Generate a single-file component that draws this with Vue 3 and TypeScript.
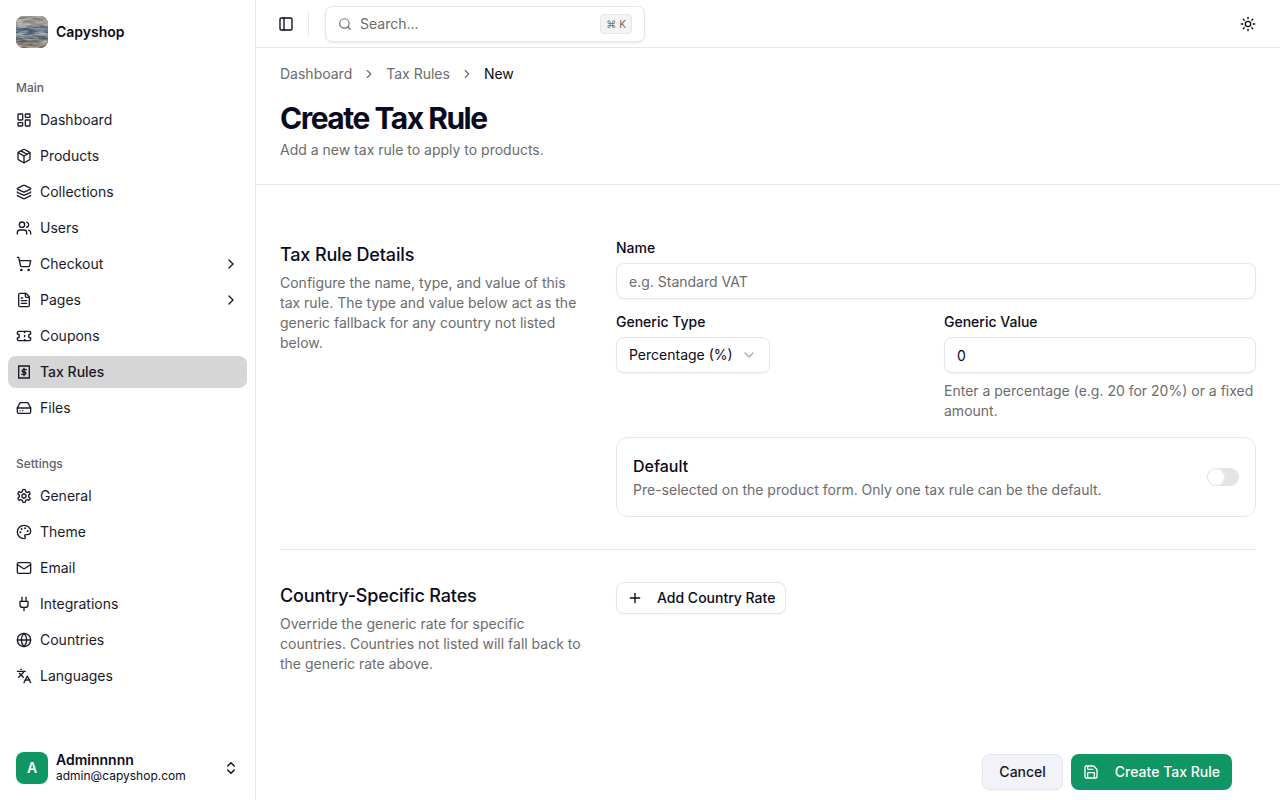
<script setup lang="ts">
import { h } from 'vue'

// helpers so circles and rects can live in the same path list as the rest
const circle = (cx: number, cy: number, r: number) =>
	`M${cx - r} ${cy}a${r} ${r} 0 1 0 ${2 * r} 0a${r} ${r} 0 1 0 ${-2 * r} 0`
const rect = (x: number, y: number, w: number, hh: number, r: number) =>
	`M${x + r} ${y}h${w - 2 * r}a${r} ${r} 0 0 1 ${r} ${r}v${hh - 2 * r}a${r} ${r} 0 0 1 ${-r} ${r}h${-(w - 2 * r)}a${r} ${r} 0 0 1 ${-r} ${-r}v${-(hh - 2 * r)}a${r} ${r} 0 0 1 ${r} ${-r}z`

const ICONS: Record<string, string[]> = {
	dashboard: [rect(3, 3, 7, 9, 1), rect(14, 3, 7, 5, 1), rect(14, 12, 7, 9, 1), rect(3, 16, 7, 5, 1)],
	package: [
		'M11 21.73a2 2 0 0 0 2 0l7-4A2 2 0 0 0 21 16V8a2 2 0 0 0-1-1.73l-7-4a2 2 0 0 0-2 0l-7 4A2 2 0 0 0 3 8v8a2 2 0 0 0 1 1.73z',
		'M12 22V12',
		'M3.29 7 12 12l8.71-5',
		'm7.5 4.27 9 5.15'
	],
	layers: [
		'M12.83 2.18a2 2 0 0 0-1.66 0L2.6 6.08a1 1 0 0 0 0 1.83l8.58 3.91a2 2 0 0 0 1.66 0l8.58-3.9a1 1 0 0 0 0-1.83z',
		'M2 12a1 1 0 0 0 .58.91l8.6 3.91a2 2 0 0 0 1.65 0l8.58-3.9A1 1 0 0 0 22 12',
		'M2 17a1 1 0 0 0 .58.91l8.6 3.91a2 2 0 0 0 1.65 0l8.58-3.9A1 1 0 0 0 22 17'
	],
	users: [
		'M16 21v-2a4 4 0 0 0-4-4H6a4 4 0 0 0-4 4v2',
		circle(9, 7, 4),
		'M22 21v-2a4 4 0 0 0-3-3.87',
		'M16 3.13a4 4 0 0 1 0 7.75'
	],
	cart: [
		circle(8, 21, 1),
		circle(19, 21, 1),
		'M2.05 2.05h2l2.66 12.42a2 2 0 0 0 2 1.58h9.78a2 2 0 0 0 1.95-1.57l1.65-7.43H5.12'
	],
	file: [
		'M15 2H6a2 2 0 0 0-2 2v16a2 2 0 0 0 2 2h12a2 2 0 0 0 2-2V7Z',
		'M14 2v4a2 2 0 0 0 2 2h4',
		'M10 9H8',
		'M16 13H8',
		'M16 17H8'
	],
	ticket: [
		'M2 9a3 3 0 0 1 0 6v2a2 2 0 0 0 2 2h16a2 2 0 0 0 2-2v-2a3 3 0 0 1 0-6V7a2 2 0 0 0-2-2H4a2 2 0 0 0-2 2Z',
		'M13 5v2',
		'M13 17v2',
		'M13 11v2'
	],
	// своя иконка: рамка с пунктиром сверху и снизу и знак доллара
	receipt: [
		'M4 3.5v17',
		'M20 3.5v17',
		'M4 3h16',
		'M4 21h16',
		'M12 6.5v11',
		'M15.5 8.5H11a1.75 1.75 0 0 0 0 3.5h2a1.75 1.75 0 0 1 0 3.5H8.5'
	],
	drive: [
		'M22 12H2',
		'M5.45 5.11 2 12v6a2 2 0 0 0 2 2h16a2 2 0 0 0 2-2v-6l-3.45-6.89A2 2 0 0 0 16.76 4H7.24a2 2 0 0 0-1.79 1.11z',
		'M6 16h.01',
		'M10 16h.01'
	],
	settings: [
		'M12.22 2h-.44a2 2 0 0 0-2 2v.18a2 2 0 0 1-1 1.73l-.43.25a2 2 0 0 1-2 0l-.15-.08a2 2 0 0 0-2.73.73l-.22.38a2 2 0 0 0 .73 2.73l.15.1a2 2 0 0 1 1 1.72v.51a2 2 0 0 1-1 1.74l-.15.09a2 2 0 0 0-.73 2.73l.22.38a2 2 0 0 0 2.73.73l.15-.08a2 2 0 0 1 2 0l.43.25a2 2 0 0 1 1 1.73V20a2 2 0 0 0 2 2h.44a2 2 0 0 0 2-2v-.18a2 2 0 0 1 1-1.73l.43-.25a2 2 0 0 1 2 0l.15.08a2 2 0 0 0 2.73-.73l.22-.39a2 2 0 0 0-.73-2.73l-.15-.08a2 2 0 0 1-1-1.74v-.5a2 2 0 0 1 1-1.74l.15-.09a2 2 0 0 0 .73-2.73l-.22-.38a2 2 0 0 0-2.73-.73l-.15.08a2 2 0 0 1-2 0l-.43-.25a2 2 0 0 1-1-1.73V4a2 2 0 0 0-2-2z',
		circle(12, 12, 3)
	],
	palette: [
		'M12 22a1 1 0 0 1 0-20 10 9 0 0 1 10 9 5 5 0 0 1-5 5h-2.25a1.75 1.75 0 0 0-1.4 2.8l.3.4a1.75 1.75 0 0 1-1.4 2.8z',
		circle(13.5, 6.5, 0.5),
		circle(17.5, 10.5, 0.5),
		circle(6.5, 12.5, 0.5),
		circle(8.5, 7.5, 0.5)
	],
	mail: ['m22 7-8.991 5.727a2 2 0 0 1-2.009 0L2 7', rect(2, 4, 20, 16, 2)],
	plug: ['M12 22v-5', 'M9 8V2', 'M15 8V2', 'M18 8v5a4 4 0 0 1-4 4h-4a4 4 0 0 1-4-4V8Z'],
	globe: [circle(12, 12, 10), 'M12 2a14.5 14.5 0 0 0 0 20 14.5 14.5 0 0 0 0-20', 'M2 12h20'],
	languages: ['m5 8 6 6', 'm4 14 6-6 2-3', 'M2 5h12', 'M7 2h1', 'm22 22-5-10-5 10', 'M14 18h6'],
	chevronRight: ['m9 18 6-6-6-6'],
	chevronDown: ['m6 9 6 6 6-6'],
	chevronsUpDown: ['m7 15 5 5 5-5', 'm7 9 5-5 5 5'],
	panel: [rect(3, 3, 18, 18, 2), 'M9 3v18'],
	search: ['m21 21-4.34-4.34', circle(11, 11, 8)],
	sun: [
		circle(12, 12, 4),
		'M12 2v2',
		'M12 20v2',
		'm4.93 4.93 1.41 1.41',
		'm17.66 17.66 1.41 1.41',
		'M2 12h2',
		'M20 12h2',
		'm6.34 17.66-1.41 1.41',
		'm19.07 4.93-1.41 1.41'
	],
	save: [
		'M15.2 3a2 2 0 0 1 1.4.6l3.8 3.8a2 2 0 0 1 .6 1.4V19a2 2 0 0 1-2 2H5a2 2 0 0 1-2-2V5a2 2 0 0 1 2-2z',
		'M17 21v-7a1 1 0 0 0-1-1H8a1 1 0 0 0-1 1v7',
		'M7 3v4a1 1 0 0 0 1 1h7'
	],
	plus: ['M5 12h14', 'M12 5v14']
}

const Icon = (props: { name: string }) =>
	h(
		'svg',
		{
			viewBox: '0 0 24 24',
			fill: 'none',
			stroke: 'currentColor',
			'stroke-width': 2,
			'stroke-linecap': 'round',
			'stroke-linejoin': 'round'
		},
		ICONS[props.name].map((d) => h('path', { d }))
	)

interface NavItem {
	label: string
	icon: string
	more?: boolean
	active?: boolean
}

const mainNav: NavItem[] = [
	{ label: 'Dashboard', icon: 'dashboard' },
	{ label: 'Products', icon: 'package' },
	{ label: 'Collections', icon: 'layers' },
	{ label: 'Users', icon: 'users' },
	{ label: 'Checkout', icon: 'cart', more: true },
	{ label: 'Pages', icon: 'file', more: true },
	{ label: 'Coupons', icon: 'ticket' },
	{ label: 'Tax Rules', icon: 'receipt', active: true },
	{ label: 'Files', icon: 'drive' }
]

const settingsNav: NavItem[] = [
	{ label: 'General', icon: 'settings' },
	{ label: 'Theme', icon: 'palette' },
	{ label: 'Email', icon: 'mail' },
	{ label: 'Integrations', icon: 'plug' },
	{ label: 'Countries', icon: 'globe' },
	{ label: 'Languages', icon: 'languages' }
]

const groups = [
	{ title: 'Main', items: mainNav },
	{ title: 'Settings', items: settingsNav }
]
</script>

<template>
	<div class="app">
		<aside class="sidebar">
			<div class="brand">
				<!-- логотип: фото заменено полосами и шумом -->
				<svg class="brand-logo" viewBox="0 0 32 32">
					<defs>
						<filter id="rock" x="0" y="0" width="100%" height="100%">
							<feTurbulence type="fractalNoise" baseFrequency="0.09 0.4" numOctaves="3" seed="7" />
							<feColorMatrix type="matrix" values="0 0 0 0 0.9  0 0 0 0 0.88  0 0 0 0 0.84  1.8 0 0 0 -0.62" />
						</filter>
					</defs>
					<rect width="32" height="32" fill="#76787a" />
					<path d="M0 0h32v6C24 4 12 8 0 5z" fill="#7d7a72" />
					<path d="M0 5c8 2 20-2 32 1v5C22 9 10 13 0 10z" fill="#8d8a80" />
					<path d="M0 10c9 2 20-2 32 1v7C20 15 10 21 0 18z" fill="#475d72" />
					<path d="M0 21c9-1 21-3 32 0v5C22 24 10 27 0 26z" fill="#4f5c64" />
					<path d="M0 26c10 1 22-2 32 0v6H0z" fill="#75695b" />
					<rect width="32" height="32" filter="url(#rock)" opacity="0.75" />
				</svg>
				<span class="brand-name">Capyshop</span>
			</div>

			<nav class="nav">
				<div v-for="group in groups" :key="group.title" class="nav-group">
					<div class="nav-title">{{ group.title }}</div>
					<a
						v-for="item in group.items"
						:key="item.label"
						class="nav-item"
						:class="{ 'nav-item-active': item.active }"
					>
						<Icon :name="item.icon" class="icon-16" />
						<span class="nav-label">{{ item.label }}</span>
						<Icon v-if="item.more" name="chevronRight" class="icon-16 nav-more" />
					</a>
				</div>
			</nav>

			<div class="account">
				<div class="avatar">A</div>
				<div class="account-text">
					<div class="account-name">Adminnnnn</div>
					<div class="account-mail">admin@capyshop.com</div>
				</div>
				<Icon name="chevronsUpDown" class="icon-16" />
			</div>
		</aside>

		<div class="main">
			<header class="topbar">
				<Icon name="panel" class="icon-16" />
				<span class="topbar-sep"></span>
				<div class="search">
					<Icon name="search" class="search-icon" />
					<span class="search-text">Search...</span>
					<kbd class="search-kbd"><span class="kbd-cmd">⌘</span> K</kbd>
				</div>
				<Icon name="sun" class="icon-16 topbar-theme" />
			</header>

			<div class="page-head">
				<div class="crumbs">
					<span>Dashboard</span>
					<Icon name="chevronRight" class="crumb-sep" />
					<span>Tax Rules</span>
					<Icon name="chevronRight" class="crumb-sep" />
					<span class="crumb-current">New</span>
				</div>
				<h1 class="page-title">Create Tax Rule</h1>
				<p class="page-sub">Add a new tax rule to apply to products.</p>
			</div>

			<form class="form" @submit.prevent>
				<section class="section section-details">
					<div class="section-info">
						<h2 class="section-title">Tax Rule Details</h2>
						<p class="section-desc">
							Configure the name, type, and value of this tax rule. The type and value below act as the generic fallback for any country not listed below.
						</p>
					</div>
					<div class="fields">
						<div class="field">
							<label class="label">Name</label>
							<input class="input" placeholder="e.g. Standard VAT" />
						</div>
						<div class="field-row">
							<div class="field">
								<label class="label">Generic Type</label>
								<div class="select">
									<span>Percentage (%)</span>
									<Icon name="chevronDown" class="select-chevron" />
								</div>
							</div>
							<div class="field">
								<label class="label">Generic Value</label>
								<input class="input" value="0" />
								<p class="help">Enter a percentage (e.g. 20 for 20%) or a fixed amount.</p>
							</div>
						</div>
						<div class="default-card">
							<div>
								<div class="default-title">Default</div>
								<div class="default-desc">Pre-selected on the product form. Only one tax rule can be the default.</div>
							</div>
							<span class="switch"><span class="switch-thumb"></span></span>
						</div>
					</div>
				</section>

				<section class="section section-rates">
					<div class="section-info">
						<h2 class="section-title">Country-Specific Rates</h2>
						<p class="section-desc">
							Override the generic rate for specific countries. Countries not listed will fall back to the generic rate above.
						</p>
					</div>
					<div>
						<button type="button" class="btn-add">
							<Icon name="plus" class="icon-16" />
							<span>Add Country Rate</span>
						</button>
					</div>
				</section>

				<div class="actions">
					<button type="button" class="btn-cancel">Cancel</button>
					<button type="submit" class="btn-submit">
						<Icon name="save" class="icon-16" />
						<span>Create Tax Rule</span>
					</button>
				</div>
			</form>
		</div>
	</div>
</template>

<style>
html,
body {
	margin: 0;
	background: #fff;
}
</style>

<style scoped>
.app {
	display: flex;
	height: 800px;
	overflow: hidden;
	background: #fff;
	color: #0b0b1a;
	font-family: Inter, "Liberation Sans", sans-serif;
	font-size: 14px;
	line-height: 20px;
}

.icon-16 {
	flex: none;
	width: 16px;
	height: 16px;
}

.sidebar {
	flex: none;
	box-sizing: border-box;
	width: 256px;
	height: 100%;
	display: flex;
	flex-direction: column;
	border-right: 1px solid #e8e8e8;
}

.brand {
	display: flex;
	align-items: center;
	gap: 8px;
	padding: 16px 16px 0;
	height: 32px;
}

.brand-logo {
	flex: none;
	width: 32px;
	height: 32px;
	border-radius: 8px;
}

.brand-name {
	font-weight: 600;
}

.nav {
	flex: 1;
	padding: 24px 8px 0;
}

.nav-group + .nav-group {
	margin-top: 24px;
}

.nav-title {
	height: 32px;
	padding: 0 8px;
	display: flex;
	align-items: center;
	color: #60606c;
	font-size: 12px;
	line-height: 16px;
	font-weight: 500;
}

.nav-group {
	display: flex;
	flex-direction: column;
	gap: 4px;
}

.nav-title + .nav-item {
	margin-top: -4px;
}

.nav-item {
	display: flex;
	align-items: center;
	gap: 8px;
	height: 32px;
	padding: 0 8px;
	border-radius: 8px;
	color: #1a1a28;
}

.nav-item-active {
	background: #d6d6d6;
	font-weight: 500;
}

.nav-label {
	flex: 1;
}

.account {
	display: flex;
	align-items: center;
	gap: 8px;
	padding: 0 16px 16px;
}

.avatar {
	flex: none;
	width: 32px;
	height: 32px;
	border-radius: 8px;
	background: #109665;
	color: #fff;
	display: flex;
	align-items: center;
	justify-content: center;
	font-weight: 600;
}

.account-text {
	flex: 1;
	min-width: 0;
}

.account-name {
	font-weight: 600;
	line-height: 16px;
}

.account-mail {
	font-size: 12px;
	line-height: 16px;
}

.main {
	flex: 1;
	min-width: 0;
	display: flex;
	flex-direction: column;
}

.topbar {
	flex: none;
	box-sizing: border-box;
	height: 48px;
	display: flex;
	align-items: center;
	padding: 0 24px 0 22px;
	border-bottom: 1px solid #e8e8e8;
}

.topbar-sep {
	width: 1px;
	height: 24px;
	margin: 0 16px 0 14px;
	background: #e8e8e8;
}

.search {
	box-sizing: border-box;
	width: 320px;
	height: 36px;
	display: flex;
	align-items: center;
	gap: 8px;
	padding: 0 12px;
	border: 1px solid #e6e6e6;
	border-radius: 8px;
	box-shadow: 0 1px 3px rgba(0, 0, 0, 0.1);
	color: #6c6c6c;
}

.search-icon {
	width: 14px;
	height: 14px;
}

.search-text {
	flex: 1;
}

.search-kbd {
	box-sizing: border-box;
	display: flex;
	align-items: center;
	gap: 3px;
	height: 20px;
	padding: 0 5px;
	border: 1px solid #e6e6e6;
	border-radius: 4px;
	background: #f4f4f5;
	color: #6c6c6c;
	font-family: inherit;
	font-size: 10px;
	font-weight: 400;
}

.kbd-cmd {
	margin-top: 2px;
	font-family: "DejaVu Sans", sans-serif;
}

.topbar-theme {
	margin-left: auto;
}

.page-head {
	flex: none;
	box-sizing: border-box;
	height: 137px;
	padding: 16px 24px 0;
	border-bottom: 1px solid #e8e8e8;
}

.crumbs {
	display: flex;
	align-items: center;
	gap: 10px;
	color: #6c6c6c;
}

.crumb-sep {
	width: 14px;
	height: 14px;
}

.crumb-current {
	color: #0b0b1a;
}

.page-title {
	margin: 16px 0 0;
	font-size: 30px;
	line-height: 36px;
	font-weight: 700;
	letter-spacing: -1.5px;
	color: #0a0a1e;
}

.page-sub {
	margin: 4px 0 0;
	color: #6c6c6c;
}

.form {
	flex: 1;
	min-height: 0;
	display: flex;
	flex-direction: column;
	padding: 0 24px;
}

.section {
	display: grid;
	grid-template-columns: 312px 1fr;
	gap: 24px;
}

.section-details {
	padding: 56px 0 32px;
	border-bottom: 1px solid #e8e8e8;
}

.section-rates {
	padding-top: 32px;
}

.section-info {
	padding-right: 8px;
}

.section-title {
	margin: 0;
	font-size: 18px;
	line-height: 28px;
	font-weight: 500;
	letter-spacing: -0.15px;
}

.section-desc {
	margin: 4px 0 0;
	color: #6c6c6c;
}

.fields {
	display: flex;
	flex-direction: column;
	gap: 16px;
}

.field {
	display: flex;
	flex-direction: column;
	align-items: flex-start;
	gap: 8px;
}

.field-row {
	display: grid;
	grid-template-columns: 1fr 1fr;
	gap: 16px;
}

.label {
	font-weight: 500;
	line-height: 14px;
}

.input {
	box-sizing: border-box;
	width: 100%;
	height: 36px;
	padding: 0 12px;
	border: 1px solid #e6e6e6;
	border-radius: 8px;
	box-shadow: 0 1px 2px rgba(0, 0, 0, 0.05);
	outline: none;
	font: inherit;
	color: inherit;
	background: #fff;
}

.input::placeholder {
	color: #6c6c6c;
	opacity: 1;
}

.select {
	box-sizing: border-box;
	height: 36px;
	display: flex;
	align-items: center;
	gap: 8px;
	padding: 0 12px;
	border: 1px solid #e6e6e6;
	border-radius: 8px;
	box-shadow: 0 1px 2px rgba(0, 0, 0, 0.05);
}

.select-chevron {
	width: 16px;
	height: 16px;
	color: #a8a8ac;
}

.help {
	margin: 0;
	color: #6c6c6c;
}

.default-card {
	display: flex;
	align-items: center;
	justify-content: space-between;
	height: 80px;
	box-sizing: border-box;
	padding: 0 16px;
	border: 1px solid #e6e6e6;
	border-radius: 12px;
}

.default-title {
	font-size: 16px;
	line-height: 24px;
	font-weight: 500;
}

.default-desc {
	margin-top: 2px;
	color: #6c6c6c;
}

.switch {
	flex: none;
	box-sizing: border-box;
	width: 32px;
	height: 18px;
	border-radius: 9px;
	background: #e4e4e4;
	display: flex;
}

.switch-thumb {
	width: 18px;
	height: 18px;
	border-radius: 50%;
	background: #fff;
	box-shadow: 0 0 0 1px #e4e4e4 inset;
}

.btn-add {
	display: inline-flex;
	align-items: center;
	gap: 14px;
	height: 32px;
	padding: 0 10px;
	border: 1px solid #e6e6e6;
	border-radius: 8px;
	background: #fff;
	box-shadow: 0 1px 2px rgba(0, 0, 0, 0.05);
	font: inherit;
	font-weight: 500;
	color: inherit;
}

.actions {
	margin-top: auto;
	display: flex;
	justify-content: flex-end;
	gap: 8px;
	padding: 0 24px 10px;
}

.btn-cancel {
	box-sizing: border-box;
	height: 36px;
	padding: 0 16px;
	border: 1px solid #e6e6ea;
	border-radius: 8px;
	background: #f1f3f8;
	box-shadow: 0 1px 2px rgba(0, 0, 0, 0.05);
	font: inherit;
	font-weight: 500;
	color: #17171f;
}

.btn-submit {
	display: inline-flex;
	align-items: center;
	gap: 16px;
	height: 36px;
	padding: 0 12px;
	border: none;
	border-radius: 8px;
	background: #109665;
	font: inherit;
	font-weight: 500;
	color: #fff;
}
</style>
